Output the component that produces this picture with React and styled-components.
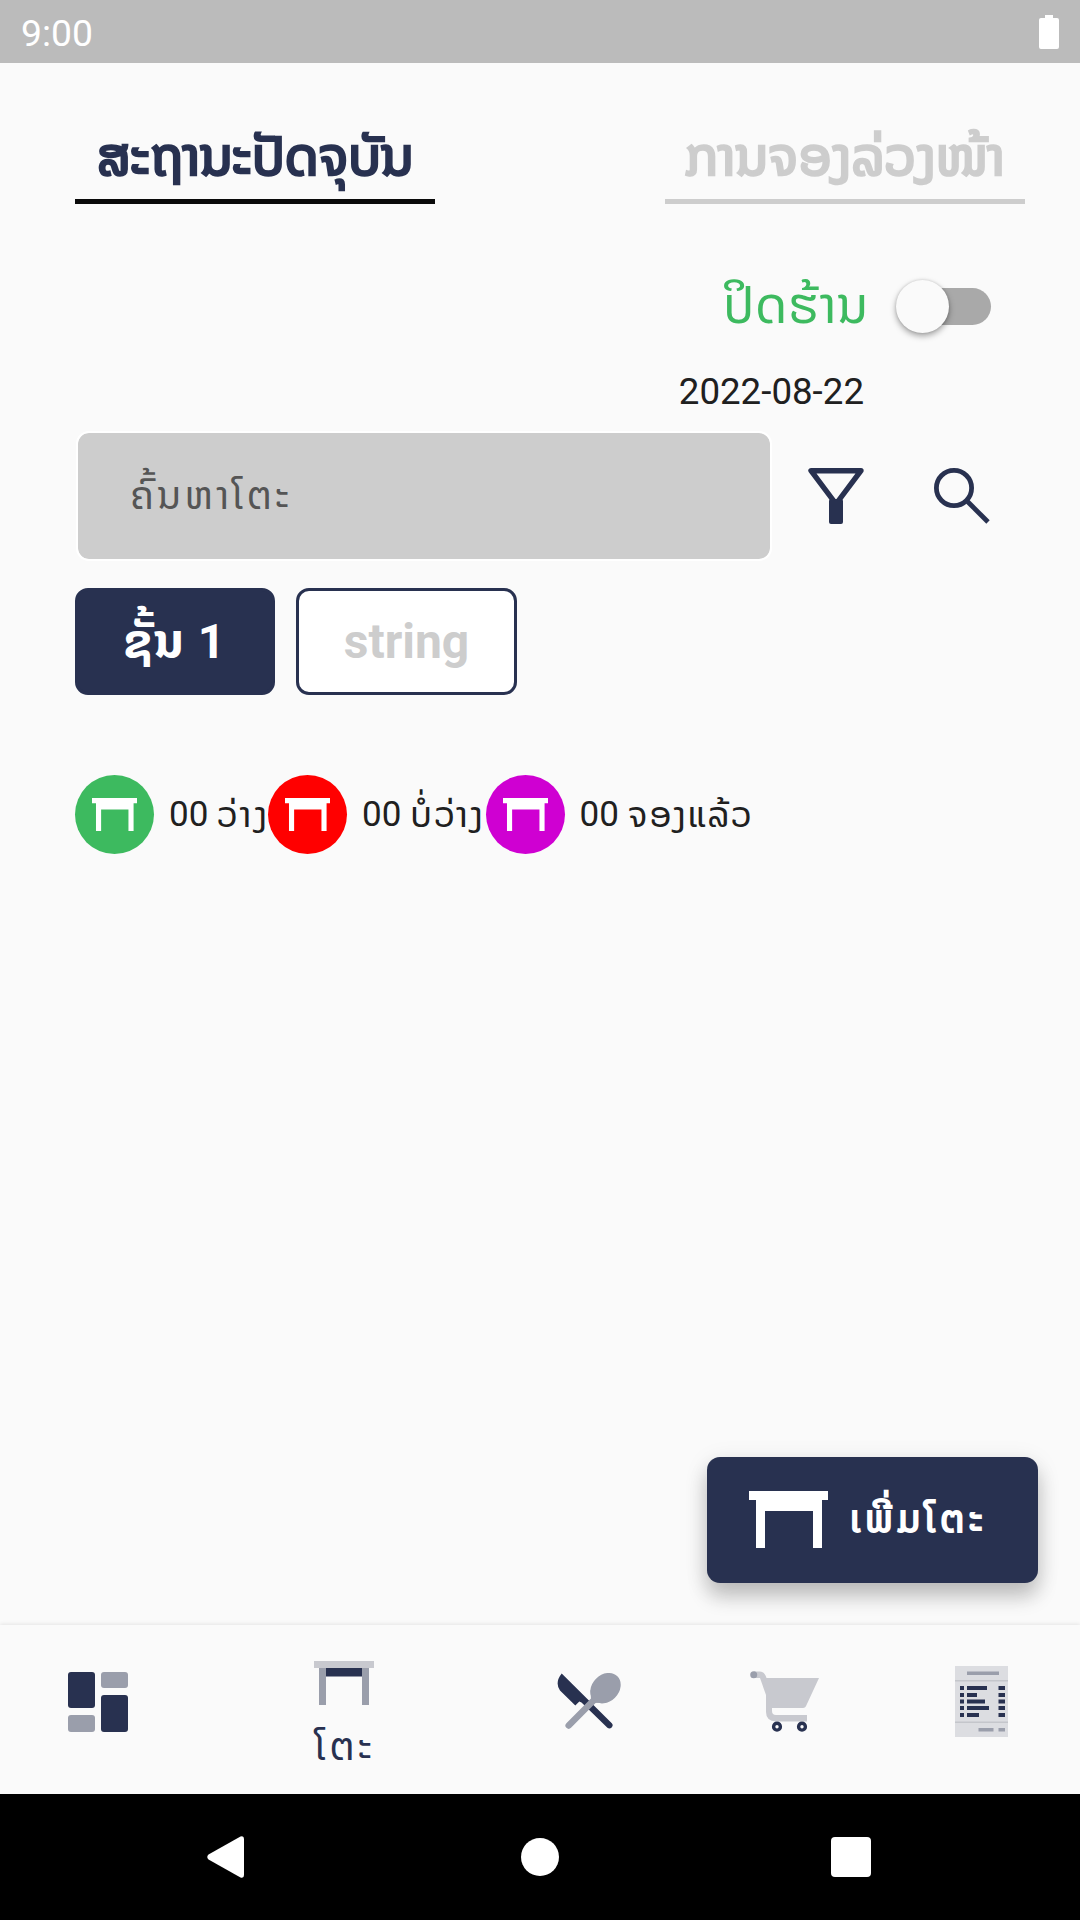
import React from "react";
import styled, { createGlobalStyle } from "styled-components";

const navy = "#283150";
const grey = "#cdcdcd";
const mid = "#9a9eab";

const GlobalStyle = createGlobalStyle`
  * { box-sizing: border-box; }
  body { margin: 0; background: #fafafa; font-family: Roboto, "Noto Sans Lao", "DejaVu Sans", sans-serif; }
  svg { display: block; flex: none; }
`;

const Screen = styled.div`
  width: 1080px;
  height: 1920px;
  display: flex;
  flex-direction: column;
  background: #fafafa;
  overflow: hidden;
`;

const StatusBar = styled.header`
  height: 63px;
  flex: none;
  display: flex;
  align-items: center;
  justify-content: space-between;
  padding: 2px 21px 0 21px;
  background: #bbbbbb;
  color: #fff;
  font-size: 37.3px;
`;

const Battery = styled.svg`
  margin-bottom: 2px;
`;

const Content = styled.main`
  flex: 1;
  display: flex;
  flex-direction: column;
  padding: 0 0 0 75px;
`;

const Tabs = styled.nav`
  display: flex;
  justify-content: space-between;
  padding-right: 55px;
`;

const Tab = styled.div`
  width: 360px;
  height: 141px;
  display: flex;
  justify-content: center;
  align-items: flex-end;
  padding-bottom: 12px;
  border-bottom: 5px solid ${(p) => (p.$active ? "#0a0a0a" : grey)};
  color: ${(p) => (p.$active ? navy : grey)};
`;

const Label = styled.span`
  font-size: ${(p) => p.$size}px;
  font-weight: ${(p) => (p.$bold ? 700 : 400)};
  letter-spacing: ${(p) => p.$track || 0}px;
  -webkit-text-stroke: ${(p) => p.$stroke || 0}px currentColor;
  line-height: 60px;
  white-space: pre;
`;

const ToggleRow = styled.div`
  height: 104px;
  margin-top: 50px;
  padding-right: 89px;
  display: flex;
  align-items: center;
  justify-content: flex-end;
  gap: 28px;
  color: #3dba5f;
`;

const Track = styled.div`
  width: 90px;
  height: 37px;
  margin-left: 4px;
  border-radius: 19px;
  background: #a9a9a9;
  display: flex;
  align-items: center;
`;

const Thumb = styled.div`
  width: 53px;
  height: 53px;
  margin-left: -5px;
  border-radius: 50%;
  background: #fafafa;
  box-shadow: 0 3px 6px rgba(0, 0, 0, 0.35), 0 0 3px rgba(0, 0, 0, 0.15);
`;

const DateRow = styled.div`
  height: 73px;
  padding: 4px 216px 0 0;
  text-align: right;
  color: #202020;
`;

const SearchRow = styled.div`
  height: 130px;
  padding-left: 1px;
  display: flex;
  align-items: center;
`;

const SearchBox = styled.div`
  width: 696px;
  height: 130px;
  border: 2px solid #fff;
  border-radius: 13px;
  background: ${grey};
  background-clip: padding-box;
  color: #555;
  display: flex;
  align-items: center;
  padding-left: 52px;
`;

const IconButton = styled.div`
  margin-left: ${(p) => p.$gap}px;
`;

const Floors = styled.div`
  display: flex;
  gap: 21px;
  margin-top: 27px;
`;

const Floor = styled.div`
  width: ${(p) => p.$width}px;
  height: 107px;
  border-radius: 13px;
  border: 3px solid ${navy};
  background: ${(p) => (p.$active ? navy : "#fff")};
  color: ${(p) => (p.$active ? "#fff" : grey)};
  display: flex;
  align-items: center;
  justify-content: center;
`;

const Legend = styled.div`
  display: flex;
  margin-top: 80px;
  color: #202020;
`;

const LegendItem = styled.div`
  width: ${(p) => p.$width}px;
  display: flex;
  align-items: center;
`;

const Dot = styled.div`
  width: 79px;
  height: 79px;
  flex: none;
  margin-right: 15px;
  border-radius: 50%;
  background: ${(p) => p.$color};
  display: flex;
  align-items: center;
  justify-content: center;
`;

const AddButton = styled.div`
  width: 331px;
  height: 126px;
  margin: auto 42px 42px 0;
  align-self: flex-end;
  padding: 0 0 2px 42px;
  display: flex;
  align-items: center;
  gap: 22px;
  border-radius: 13px;
  background: ${navy};
  color: #fff;
  box-shadow: 0 14px 20px rgba(0, 0, 0, 0.2), 0 5px 24px rgba(0, 0, 0, 0.1);
`;

const BottomNav = styled.nav`
  height: 169px;
  flex: none;
  display: flex;
  box-shadow: 0 -1px 4px rgba(0, 0, 0, 0.09);
  background: #fafafa;
  color: ${navy};
`;

const NavItem = styled.div`
  width: ${(p) => p.$width}px;
  display: flex;
  flex-direction: column;
  align-items: center;
  gap: 12px;
  padding-top: ${(p) => p.$top}px;
`;

const NavLabel = styled(Label)`
  padding-left: 4px;
`;

const SystemBar = styled.footer`
  height: 126px;
  flex: none;
  display: flex;
  justify-content: space-between;
  align-items: center;
  padding: 0 209px 0 207px;
  background: #000;
`;

const TableGlyph = ({ width, height }) => (
  <svg width={width} height={height} viewBox="0 0 79 57" preserveAspectRatio="none" fill="#fff">
    <path d="M0 0H79V9H73V57H64V20H16V57H7V9H0Z" />
  </svg>
);

const legend = [
  { color: "#3dba5f", count: "00 ", label: "ວ່າງ", width: 193, track: 2.6 },
  { color: "#ff0000", count: "00 ", label: "ບໍ່ວ່າງ", width: 217.5, track: 2 },
  { color: "#cf00d2", count: "00 ", label: "ຈອງແລ້ວ", width: 280, track: 1.3 },
];

const receiptRows = [
  [20, 20],
  [27, 10],
  [33.5, 18],
  [40, 22],
  [47, 12],
];

export default function App() {
  return (
    <Screen>
      <GlobalStyle />
      <StatusBar>
        <span>9:00</span>
        <Battery width="20" height="34" viewBox="0 0 20 34" fill="#fff">
          <path d="M6 0H14V3H18Q20 3 20 5V32Q20 34 18 34H2Q0 34 0 32V5Q0 3 2 3H6Z" />
        </Battery>
      </StatusBar>
      <Content>
        <Tabs>
          <Tab $active>
            <Label $size={54} $stroke={2.6} $track={-0.6}>ສະຖານະປັດຈຸບັນ</Label>
          </Tab>
          <Tab>
            <Label $size={54} $stroke={2.6} $track={-0.3}>ການຈອງລ່ວງໜ້າ</Label>
          </Tab>
        </Tabs>
        <ToggleRow>
          <Label $size={51} $track={0.6}>ປິດຮ້ານ</Label>
          <Track>
            <Thumb />
          </Track>
        </ToggleRow>
        <DateRow>
          <Label $size={36.7}>2022-08-22</Label>
        </DateRow>
        <SearchRow>
          <SearchBox>
            <Label $size={39} $track={3.4}>ຄົ້ນຫາໂຕະ</Label>
          </SearchBox>
          <IconButton $gap={36}>
            <svg width="56" height="56" viewBox="0 0 56 56">
              <path d="M3 2.700H53L28 36Z" fill="none" stroke={navy} strokeWidth="5.400" strokeLinejoin="round" />
              <rect x="21" y="31" width="14" height="25" rx="2" fill={navy} />
            </svg>
          </IconButton>
          <IconButton $gap={70}>
            <svg width="56" height="56" viewBox="0 0 56 56" fill="none" stroke={navy} strokeWidth="4.800">
              <circle cx="20" cy="20" r="17.600" />
              <path d="M32.500 32.500L54 54" />
            </svg>
          </IconButton>
        </SearchRow>
        <Floors>
          <Floor $active $width={200}>
            <Label $size={48} $track={1.2} $bold>ຊັ້ນ 1</Label>
          </Floor>
          <Floor $width={221}>
            <Label $size={48} $bold>string</Label>
          </Floor>
        </Floors>
        <Legend>
          {legend.map((item) => (
            <LegendItem key={item.color} $width={item.width}>
              <Dot $color={item.color}>
                <TableGlyph width={45} height={33} />
              </Dot>
              <Label $size={35}>{item.count}</Label>
              <Label $size={36} $track={item.track}>{item.label}</Label>
            </LegendItem>
          ))}
        </Legend>
        <AddButton>
          <TableGlyph width={79} height={57} />
          <Label $size={38} $track={4.4} $stroke={1.8}>ເພີ່ມໂຕະ</Label>
        </AddButton>
      </Content>
      <BottomNav>
        <NavItem $width={196} $top={47}>
          <svg width="60" height="60" viewBox="0 0 60 60">
            <rect width="27" height="36" rx="3" fill={navy} />
            <rect x="33" width="27" height="16" rx="3" fill={mid} />
            <rect x="33" y="23" width="27" height="37" rx="3" fill={navy} />
            <rect y="43" width="27" height="17" rx="3" fill={mid} />
          </svg>
        </NavItem>
        <NavItem $width={295} $top={36}>
          <svg width="60" height="44" viewBox="0 0 60 44">
            <rect y="0" width="60" height="7" fill="#c8c9cf" />
            <rect x="5" y="7" width="7" height="37" fill={mid} />
            <rect x="48" y="7" width="7" height="37" fill={mid} />
            <rect x="12" y="7" width="36" height="8.500" fill={navy} />
          </svg>
          <NavLabel $size={39} $track={3.4}>ໂຕະ</NavLabel>
        </NavItem>
        <NavItem $width={196} $top={48}>
          <svg width="64" height="56" viewBox="0 0 64 56">
            <path d="M4.700 0.500L54.800 50.200A3.200 3.200 0 0 1 50.400 54.800L24.500 29.500L22.300 28.500L18.300 32.500L3 17.500Q-2.500 9.500 4.700 0.500Z" fill={navy} />
            <path d="M11.700 52.500L38 26" stroke={mid} strokeWidth="6.500" strokeLinecap="round" />
            <path d="M33.500 17L34 26L37.500 30L47 29.500Z" fill={mid} />
            <ellipse cx="48.500" cy="15.200" rx="16.800" ry="13.400" transform="rotate(-45 48.500 15.200)" fill={mid} />
          </svg>
        </NavItem>
        <NavItem $width={196} $top={46}>
          <svg width="70" height="61" viewBox="0 0 70 61">
            <path d="M4 0.500H10Q15 1 16.500 7H69L56.500 34Q55.500 37 53 37H22V40Q22 44 26 44H57V50.500H26Q16 50 16 41V24L10 7H4Z" fill="#c8c9cf" />
            <circle cx="3.700" cy="3.700" r="3.500" fill={mid} />
            <circle cx="27" cy="55.700" r="3.400" fill="none" stroke={navy} strokeWidth="3.400" />
            <circle cx="52" cy="55.700" r="3.400" fill="none" stroke={navy} strokeWidth="3.400" />
          </svg>
        </NavItem>
        <NavItem $width={197} $top={41}>
          <svg width="53" height="71" viewBox="0 0 53 71">
            <rect width="53" height="71" fill="#dcdde1" />
            <rect y="14" width="53" height="1.500" fill="#c4c6cb" />
            <rect y="55.500" width="53" height="1.500" fill="#c4c6cb" />
            <rect x="12" y="5.500" width="32" height="3.500" fill={mid} />
            {receiptRows.map(([y, w]) => (
              <g key={y} fill={navy}>
                <rect x="5" y={y} width="4" height="4" />
                <rect x="12" y={y} width={w} height="4" />
                <rect x="43.500" y={y} width="6.500" height="4" />
              </g>
            ))}
            <rect x="23.500" y="62" width="15" height="3.500" fill={mid} />
            <rect x="43.500" y="62" width="6.500" height="3.500" fill={mid} />
          </svg>
        </NavItem>
      </BottomNav>
      <SystemBar>
        <svg width="42" height="42" viewBox="0 0 42 42" fill="#fff">
          <path d="M1.500 18.500L33.500 0.600Q37 -0.500 37 3V39Q37 42.500 33.500 41.400L1.500 23.500Q-1 21 1.500 18.500Z" />
        </svg>
        <svg width="38" height="38" viewBox="0 0 38 38" fill="#fff">
          <circle cx="19" cy="19" r="19" />
        </svg>
        <svg width="40" height="40" viewBox="0 0 40 40" fill="#fff">
          <rect width="40" height="40" rx="4" />
        </svg>
      </SystemBar>
    </Screen>
  );
}
